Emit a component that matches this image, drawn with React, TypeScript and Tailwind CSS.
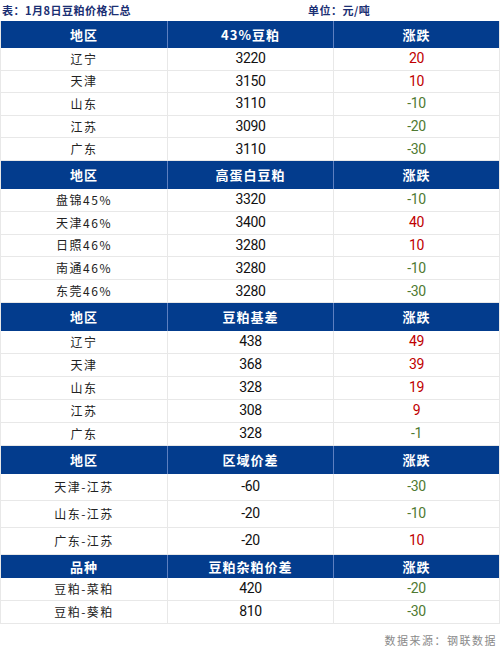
const CJK = "font-['Noto_Sans_CJK_SC',sans-serif]";
const NUM = "font-['Roboto','Noto_Sans_CJK_SC',sans-serif]";

type Row = [string, string, number];

interface Section {
  head: [string, string, string];
  headH: string;
  rowH: string;
  rows: Row[];
}

const sections: Section[] = [
  {
    head: ["地区", "43%豆粕", "涨跌"],
    headH: "h-[27px]",
    rowH: "h-[22.6px]",
    rows: [
      ["辽宁", "3220", 20],
      ["天津", "3150", 10],
      ["山东", "3110", -10],
      ["江苏", "3090", -20],
      ["广东", "3110", -30],
    ],
  },
  {
    head: ["地区", "高蛋白豆粕", "涨跌"],
    headH: "h-[28px]",
    rowH: "h-[22.8px]",
    rows: [
      ["盘锦45%", "3320", -10],
      ["天津46%", "3400", 40],
      ["日照46%", "3280", 10],
      ["南通46%", "3280", -10],
      ["东莞46%", "3280", -30],
    ],
  },
  {
    head: ["地区", "豆粕基差", "涨跌"],
    headH: "h-[28px]",
    rowH: "h-[23px]",
    rows: [
      ["辽宁", "438", 49],
      ["天津", "368", 39],
      ["山东", "328", 19],
      ["江苏", "308", 9],
      ["广东", "328", -1],
    ],
  },
  {
    head: ["地区", "区域价差", "涨跌"],
    headH: "h-[28px]",
    rowH: "h-[27px]",
    rows: [
      ["天津-江苏", "-60", -30],
      ["山东-江苏", "-20", -10],
      ["广东-江苏", "-20", 10],
    ],
  },
  {
    head: ["品种", "豆粕杂粕价差", "涨跌"],
    headH: "h-[23px]",
    rowH: "h-[23px]",
    rows: [
      ["豆粕-菜粕", "420", -20],
      ["豆粕-葵粕", "810", -30],
    ],
  },
];

function HeadRow({ cells, h }: { cells: [string, string, string]; h: string }) {
  return (
    <div className={`grid grid-cols-3 bg-[#033c8d] ${h}`}>
      {cells.map((c, i) => (
        <div
          key={i}
          className={`flex items-center justify-center text-[13px] font-bold tracking-[1px] text-white ${CJK} ${
            i > 0 ? "border-l border-[#5d7fc0]" : ""
          }`}
        >
          {c}
        </div>
      ))}
    </div>
  );
}

function DataRow({ row, h }: { row: Row; h: string }) {
  const [name, value, diff] = row;
  return (
    <div className={`grid grid-cols-3 border-b border-[#e8e8e8] ${h}`}>
      <div className={`flex items-center justify-center text-[12px] tracking-[1.5px] text-[#222] ${CJK}`}>
        {name}
      </div>
      <div
        className={`flex items-center justify-center border-l border-[#e8e8e8] text-[14px] tracking-[-0.4px] text-[#111] ${NUM}`}
      >
        {value}
      </div>
      <div
        className={`flex items-center justify-center border-l border-[#e8e8e8] text-[14px] tracking-[-0.4px] ${NUM} ${
          diff > 0 ? "text-[#c00000]" : "text-[#4f7a32]"
        }`}
      >
        {diff}
      </div>
    </div>
  );
}

export default function App() {
  return (
    <div className="h-[657px] w-[500px] overflow-hidden bg-white">
      <div className={`flex h-[21px] items-center text-[11px] font-bold text-[#1b2f73] ${CJK}`}>
        <span className="w-[308px] pl-[2px] tracking-[0.5px]">表：1月8日豆粕价格汇总</span>
        <span className="tracking-[0.5px]">单位：元/吨</span>
      </div>
      <div className="border-x border-[#e8e8e8]">
        {sections.map((s, i) => (
          <div key={i}>
            <HeadRow cells={s.head} h={s.headH} />
            {s.rows.map((r, j) => (
              <DataRow key={j} row={r} h={s.rowH} />
            ))}
          </div>
        ))}
      </div>
      <div className="flex h-[33px] items-center justify-end pr-[3px]">
        <span className={`text-[11px] tracking-[1.5px] text-[#8a8a8a] ${CJK}`}>数据来源：钢联数据</span>
      </div>
    </div>
  );
}
